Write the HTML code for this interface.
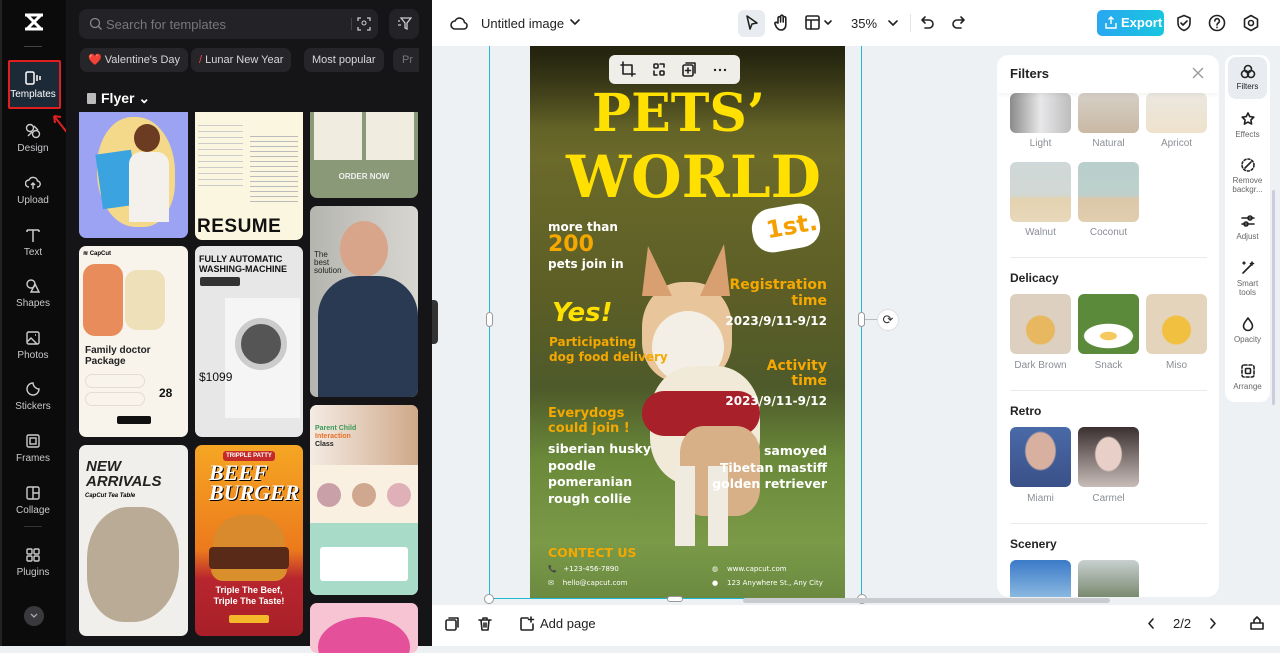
<!DOCTYPE html>
<html><head><meta charset="utf-8"><style>
*{box-sizing:border-box;margin:0;padding:0}
body{width:1280px;height:646px;overflow:hidden;position:relative;font-family:"Liberation Sans",sans-serif;background:#eef1f4}
.a{position:absolute}
.side{left:0;top:0;width:66px;height:646px;background:#0b0b0c}
.si{position:absolute;left:0;width:66px;text-align:center;color:#c9c9cc;font-size:10px}
.si svg{display:block;margin:0 auto 3px}
.panel{left:66px;top:0;width:366px;height:646px;background:#151517}
.chip{position:absolute;top:48px;height:24px;border-radius:7px;background:#26262a;color:#d8d8da;font-size:11px;line-height:24px;padding:0 8px}
.card{position:absolute;border-radius:7px;overflow:hidden}
.top{left:432px;top:0;width:848px;height:46px;background:#fff}
.bot{left:432px;top:605px;width:848px;height:41px;background:#fff}
.ic{stroke:#222;fill:none;stroke-width:1.6;stroke-linecap:round;stroke-linejoin:round}
.p{font-family:"DejaVu Sans",sans-serif;font-weight:bold;position:absolute;white-space:nowrap}
.th{position:absolute;width:61px;height:60px;border-radius:6px;overflow:hidden}
.lb{position:absolute;width:61px;text-align:center;font-size:10px;color:#8a8f96}
.sec{position:absolute;left:1010px;font-size:12px;font-weight:bold;color:#222}
.hr{position:absolute;left:1010px;width:197px;height:1px;background:#e8eaed}
.tl{position:absolute;left:1228px;width:39px;text-align:center;font-size:8px;color:#666;line-height:9px}
.tl svg{display:block;margin:0 auto 3px}
</style></head><body>

<div class="a side"></div>
<svg class="a" style="left:23px;top:12px" width="22" height="20" viewBox="0 0 22 20"><path d="M2 3h18M2 17h18M4 3l14 14M18 3L4 17" stroke="#fff" stroke-width="3" fill="none"/></svg>
<div class="a" style="left:24px;top:46px;width:18px;height:1px;background:#444"></div>
<div class="a" style="left:8px;top:60px;width:53px;height:49px;border:2px solid #e02020;background:#1c2a38;border-radius:2px"></div>
<div class="si" style="top:70px;color:#fff"><svg width="16" height="16" viewBox="0 0 16 16"><rect x="1" y="2" width="8" height="12" rx="1.5" stroke="#fff" stroke-width="1.5" fill="none"/><path d="M12 5v6M15 6v4" stroke="#fff" stroke-width="1.5"/></svg>Templates</div>
<svg class="a" style="left:50px;top:112px" width="22" height="26"><path d="M19 23L4 4M4 4l1 7M4 4l7 1" stroke="#e02020" stroke-width="2" fill="none"/></svg>
<div class="si" style="top:122px"><svg width="16" height="18" viewBox="0 0 16 16"><circle cx="5" cy="5" r="3.5" stroke="#ccc" fill="none" stroke-width="1.4"/><circle cx="11" cy="11" r="3.5" stroke="#ccc" fill="none" stroke-width="1.4"/><path d="M9 3l4 4M3 13l4-4" stroke="#ccc" stroke-width="1.4"/></svg>Design</div>
<div class="si" style="top:174px"><svg width="16" height="18" viewBox="0 0 16 16"><path d="M4 12a3.5 3.5 0 010-7 4.5 4.5 0 018.5 1A3 3 0 0112 12M8 14V8M6 10l2-2 2 2" stroke="#ccc" fill="none" stroke-width="1.4"/></svg>Upload</div>
<div class="si" style="top:226px"><svg width="16" height="18" viewBox="0 0 16 16"><path d="M2 3h12M8 3v12M2 3v2M14 3v2" stroke="#ccc" fill="none" stroke-width="1.5"/></svg>Text</div>
<div class="si" style="top:277px"><svg width="16" height="18" viewBox="0 0 16 16"><circle cx="6" cy="6" r="4" stroke="#ccc" fill="none" stroke-width="1.4"/><path d="M10 6l4 8H6z" stroke="#ccc" fill="none" stroke-width="1.4"/></svg>Shapes</div>
<div class="si" style="top:329px"><svg width="16" height="18" viewBox="0 0 16 16"><rect x="2" y="2" width="12" height="12" rx="1.5" stroke="#ccc" fill="none" stroke-width="1.4"/><path d="M2 12l4-4 6 6M10 5h1" stroke="#ccc" fill="none" stroke-width="1.4"/></svg>Photos</div>
<div class="si" style="top:380px"><svg width="16" height="18" viewBox="0 0 16 16"><path d="M14 8a6 6 0 11-6-6c0 3 3 6 6 6z" stroke="#ccc" fill="none" stroke-width="1.4"/></svg>Stickers</div>
<div class="si" style="top:432px"><svg width="16" height="18" viewBox="0 0 16 16"><rect x="2" y="2" width="12" height="12" rx="1.5" stroke="#ccc" fill="none" stroke-width="1.4"/><rect x="5" y="5" width="6" height="6" stroke="#ccc" fill="none" stroke-width="1.4"/></svg>Frames</div>
<div class="si" style="top:484px"><svg width="16" height="18" viewBox="0 0 16 16"><rect x="2" y="2" width="12" height="12" rx="1.5" stroke="#ccc" fill="none" stroke-width="1.4"/><path d="M8 2v12M8 8h6" stroke="#ccc" stroke-width="1.4"/></svg>Collage</div>
<div class="a" style="left:24px;top:526px;width:18px;height:1px;background:#333"></div>
<div class="si" style="top:546px"><svg width="16" height="18" viewBox="0 0 16 16"><rect x="2" y="2" width="5" height="5" rx="1" stroke="#ccc" fill="none" stroke-width="1.4"/><rect x="9" y="2" width="5" height="5" rx="1" stroke="#ccc" fill="none" stroke-width="1.4"/><rect x="2" y="9" width="5" height="5" rx="1" stroke="#ccc" fill="none" stroke-width="1.4"/><rect x="9" y="9" width="5" height="5" rx="1" stroke="#ccc" fill="none" stroke-width="1.4"/></svg>Plugins</div>
<div class="a" style="left:24px;top:606px;width:20px;height:20px;border-radius:50%;background:#3a3a3e"></div>
<svg class="a" style="left:29px;top:612px" width="10" height="8"><path d="M2 2l3 3 3-3" stroke="#aaa" fill="none" stroke-width="1.3"/></svg>

<div class="a panel"></div>
<div class="a" style="left:79px;top:9px;width:299px;height:30px;border-radius:8px;background:#232327"></div>
<svg class="a" style="left:89px;top:17px" width="14" height="14"><circle cx="6" cy="6" r="4.5" stroke="#888" fill="none" stroke-width="1.3"/><path d="M9.5 9.5l3 3" stroke="#888" stroke-width="1.3"/></svg>
<div class="a" style="left:106px;top:17px;color:#77777c;font-size:13px">Search for templates</div>
<div class="a" style="left:351px;top:18px;width:1px;height:12px;background:#444"></div>
<svg class="a" style="left:357px;top:17px" width="14" height="14"><path d="M1 4V1h3M10 1h3v3M13 10v3h-3M4 13H1v-3" stroke="#ccc" fill="none" stroke-width="1.3"/><circle cx="7" cy="6" r="2" stroke="#ccc" fill="none"/></svg>
<div class="a" style="left:389px;top:9px;width:30px;height:30px;border-radius:8px;background:#232327"></div>
<svg class="a" style="left:397px;top:16px" width="15" height="15"><path d="M4 2h10l-4 5v6l-2-1V7z M1 5h2M1 9h3" stroke="#ccc" fill="none" stroke-width="1.3"/></svg>
<div class="chip" style="left:80px">❤️ Valentine's Day</div>
<div class="chip" style="left:191px"><span style="color:#e44">/</span> Lunar New Year</div>
<div class="chip" style="left:304px">Most popular</div>
<div class="chip" style="left:393px;width:26px;color:#777;padding:0 0 0 9px;overflow:hidden;border-radius:7px 0 0 7px">Pr</div>
<svg class="a" style="left:86px;top:92px" width="11" height="13"><rect x="1" y="1" width="9" height="11" rx="1" fill="#bbb"/></svg>
<div class="a" style="left:101px;top:90px;color:#fff;font-size:14px;font-weight:bold">Flyer ⌄</div>

<!-- col1 -->
<div class="card" style="left:79px;top:112px;width:109px;height:126px;background:#9ca3f3;border-radius:0 0 7px 7px">
<div class="a" style="left:18px;top:5px;width:78px;height:110px;border-radius:45% 50% 40% 50%;background:#f5d98a"></div>
<div class="a" style="left:20px;top:40px;width:36px;height:55px;background:#3aa3e0;transform:rotate(-8deg)"></div>
<div class="a" style="left:55px;top:12px;width:26px;height:28px;border-radius:50%;background:#6b3c22"></div>
<div class="a" style="left:50px;top:40px;width:40px;height:70px;border-radius:12px 12px 0 0;background:#f4f1ec"></div></div>
<div class="card" style="left:79px;top:246px;width:109px;height:191px;background:#f8f4ec">
<div class="a" style="left:4px;top:4px;font-size:6px;font-weight:bold">≋ CapCut</div>
<div class="a" style="left:4px;top:18px;width:40px;height:72px;background:#e88c5c;border-radius:12px"></div>
<div class="a" style="left:46px;top:24px;width:40px;height:60px;background:#eee0b8;border-radius:12px"></div>
<div class="a" style="left:6px;top:99px;font-size:10px;font-weight:bold;line-height:11px;color:#222">Family doctor<br>Package</div>
<div class="a" style="left:6px;top:128px;width:60px;height:14px;border-radius:7px;border:1px solid #e4dcd0"></div>
<div class="a" style="left:6px;top:146px;width:60px;height:14px;border-radius:7px;border:1px solid #e4dcd0"></div>
<div class="a" style="left:80px;top:140px;font-size:12px;font-weight:bold;color:#111">28</div>
<div class="a" style="left:38px;top:170px;width:34px;height:8px;background:#111;border-radius:2px"></div></div>
<div class="card" style="left:79px;top:445px;width:109px;height:191px;background:#f1efeb">
<div class="a" style="left:7px;top:14px;font-size:15px;font-weight:bold;font-style:italic;line-height:15px;color:#222">NEW<br>ARRIVALS</div>
<div class="a" style="left:6px;top:48px;font-size:6px;font-weight:bold;font-style:italic">CapCut Tea Table</div>
<div class="a" style="left:8px;top:62px;width:92px;height:115px;border-radius:45% 40% 50% 40%;background:#b9ab95"></div></div>
<!-- col2 -->
<div class="card" style="left:195px;top:112px;width:108px;height:128px;background:#fbf6e0;border-radius:0 0 7px 7px">
<div class="a" style="left:3px;top:8px;width:45px;height:70px;background:repeating-linear-gradient(#fbf6e0 0 5px,#ccc 5px 6px)"></div>
<div class="a" style="left:55px;top:20px;width:48px;height:70px;background:repeating-linear-gradient(#fbf6e0 0 4px,#bbb 4px 5px)"></div>
<div class="a" style="left:2px;top:104px;font-size:19px;font-weight:bold;color:#111;letter-spacing:0.5px">RESUME</div></div>
<div class="card" style="left:195px;top:246px;width:108px;height:191px;background:#e7e7e7">
<div class="a" style="left:4px;top:8px;font-size:9px;font-weight:bold;line-height:10px;color:#111">FULLY AUTOMATIC<br>WASHING-MACHINE</div>
<div class="a" style="left:5px;top:31px;width:40px;height:9px;background:#333;border-radius:2px"></div>
<div class="a" style="left:30px;top:52px;width:75px;height:120px;background:#f5f5f5"></div>
<div class="a" style="left:40px;top:72px;width:52px;height:52px;border-radius:50%;background:#555;border:6px solid #ccc"></div>
<div class="a" style="left:4px;top:124px;font-size:12px;color:#111">$1099</div></div>
<div class="card" style="left:195px;top:445px;width:108px;height:191px;background:linear-gradient(#f5a623 0,#ec7a1c 55%,#b8262e 70%,#a81f28 100%)">
<div class="a" style="left:28px;top:6px;width:52px;height:10px;background:#c52a2a;border-radius:3px;color:#fff;font-size:6px;text-align:center;line-height:10px;font-weight:bold">TRIPPLE PATTY</div>
<div class="a" style="left:14px;top:18px;font-size:22px;font-weight:bold;font-style:italic;color:#fff;font-family:'Liberation Serif',serif;line-height:20px;text-shadow:1px 1px 0 #000">BEEF<br>BURGER</div>
<div class="a" style="left:18px;top:70px;width:72px;height:34px;border-radius:40px 40px 6px 6px;background:#d98a2c"></div>
<div class="a" style="left:14px;top:102px;width:80px;height:22px;background:#5a2a18;border-radius:4px"></div>
<div class="a" style="left:16px;top:124px;width:76px;height:12px;background:#d9902c;border-radius:0 0 20px 20px"></div>
<div class="a" style="left:0;top:140px;width:108px;text-align:center;font-size:9px;font-weight:bold;color:#fff;line-height:11px">Triple The Beef,<br>Triple The Taste!</div>
<div class="a" style="left:34px;top:170px;width:40px;height:8px;background:#f5b82a;border-radius:2px"></div></div>
<!-- col3 -->
<div class="card" style="left:310px;top:112px;width:108px;height:86px;background:#8a9a78;border-radius:0 0 7px 7px">
<div class="a" style="left:4px;top:0;width:48px;height:48px;background:#f1ece0"></div>
<div class="a" style="left:56px;top:0;width:48px;height:48px;background:#f1ece0"></div>
<div class="a" style="left:0;top:60px;width:108px;text-align:center;font-size:8px;font-weight:bold;color:#eee">ORDER NOW</div></div>
<div class="card" style="left:310px;top:206px;width:108px;height:191px;background:linear-gradient(90deg,#b5b5b0,#d8d6d0)">
<div class="a" style="left:30px;top:15px;width:48px;height:56px;border-radius:50%;background:#d9a58a"></div>
<div class="a" style="left:8px;top:70px;width:100px;height:121px;border-radius:40px 40px 0 0;background:#2a3a52"></div>
<div class="a" style="left:4px;top:45px;font-size:8px;line-height:8px;color:#222">The<br>best<br>solution</div></div>
<div class="card" style="left:310px;top:405px;width:108px;height:190px;background:#faf0e2">
<div class="a" style="left:0;top:0;width:108px;height:60px;background:linear-gradient(90deg,#f4ece4,#cfa888)"></div>
<div class="a" style="left:5px;top:20px;font-size:7px;font-weight:bold;line-height:8px;color:#3a9a5a">Parent Child<br><span style="color:#e8702a">Interaction</span><br><span style="color:#222">Class</span></div>
<div class="a" style="left:7px;top:78px;width:24px;height:24px;border-radius:50%;background:#c9a0a8"></div>
<div class="a" style="left:42px;top:78px;width:24px;height:24px;border-radius:50%;background:#d0a890"></div>
<div class="a" style="left:77px;top:78px;width:24px;height:24px;border-radius:50%;background:#e0b0b8"></div>
<div class="a" style="left:0;top:118px;width:108px;height:72px;background:#a8dcc8"></div>
<div class="a" style="left:10px;top:142px;width:88px;height:34px;background:#fff;border-radius:3px"></div></div>
<div class="card" style="left:310px;top:603px;width:108px;height:50px;background:#f7c4d4">
<div class="a" style="left:8px;top:14px;width:92px;height:60px;border-radius:50%;background:#e5509a"></div></div>
<div class="a" style="left:432px;top:300px;width:6px;height:44px;background:#333;border-radius:0 4px 4px 0"></div>

<!-- top bar -->
<div class="a top"></div>
<svg class="a" style="left:450px;top:15px" width="18" height="16" viewBox="0 0 18 16"><path d="M5 14a4 4 0 010-8 5 5 0 019.5 1.5A3.3 3.3 0 0114 14z" class="ic"/></svg>
<div class="a" style="left:481px;top:16px;font-size:13px;color:#222">Untitled image</div>
<svg class="a" style="left:570px;top:18px" width="10" height="8"><path d="M1 2l4 4 4-4" class="ic" stroke-width="1.4"/></svg>
<div class="a" style="left:738px;top:10px;width:27px;height:27px;border-radius:6px;background:#e8ebef"></div>
<svg class="a" style="left:744px;top:14px" width="16" height="18"><path d="M3 2l10 7-5 1-2 5z" class="ic"/></svg>
<svg class="a" style="left:773px;top:14px" width="16" height="18"><path d="M5 9V4a1.3 1.3 0 012.6 0v4V2.5a1.3 1.3 0 012.6 0V8V4a1.3 1.3 0 012.6 0v7c0 3-2 5-5 5-2 0-3-1-4.5-3L2 10a1.2 1.2 0 012-1.3z" class="ic" stroke-width="1.3"/></svg>
<svg class="a" style="left:805px;top:15px" width="30" height="16"><rect x="1" y="1" width="13" height="13" rx="1.5" class="ic" stroke-width="1.4"/><path d="M1 5h13M6 5v9M20 6l3 3 3-3" class="ic" stroke-width="1.4"/></svg>
<div class="a" style="left:851px;top:16px;font-size:13px;color:#222">35%</div>
<svg class="a" style="left:888px;top:19px" width="10" height="8"><path d="M1 2l4 4 4-4" class="ic" stroke-width="1.4"/></svg>
<div class="a" style="left:910px;top:14px;width:1px;height:18px;background:#e2e4e8"></div>
<svg class="a" style="left:920px;top:15px" width="16" height="16"><path d="M5 2L2 5l3 3M2 5h7a4 4 0 010 8H5" class="ic"/></svg>
<svg class="a" style="left:950px;top:15px" width="16" height="16"><path d="M11 2l3 3-3 3M14 5H7a4 4 0 000 8h4" class="ic" stroke="#ccd"/></svg>
<div class="a" style="left:1097px;top:10px;width:67px;height:26px;border-radius:5px;background:linear-gradient(90deg,#2aa7f0,#19c6e0);color:#fff;font-size:13px;font-weight:bold;line-height:26px;padding-left:24px">Export</div>
<svg class="a" style="left:1105px;top:16px" width="12" height="13"><path d="M6 8V1M3.5 3.5L6 1l2.5 2.5M1 7v5h10V7" stroke="#fff" fill="none" stroke-width="1.4"/></svg>
<svg class="a" style="left:1175px;top:14px" width="18" height="18"><path d="M9 1.5l6 2.5v5c0 4-3 6.5-6 7.5-3-1-6-3.5-6-7.5V4z M6 9l2 2 4-4" class="ic"/></svg>
<svg class="a" style="left:1208px;top:14px" width="18" height="18"><circle cx="9" cy="9" r="7.5" class="ic"/><path d="M6.8 7a2.3 2.3 0 114 1.5c-1 .8-1.8 1.2-1.8 2.5M9 13.3v.2" class="ic"/></svg>
<svg class="a" style="left:1242px;top:14px" width="18" height="18"><path d="M9 1.5l6.5 3.7v7.6L9 16.5l-6.5-3.7V5.2z" class="ic"/><circle cx="9" cy="9" r="2.5" class="ic"/></svg>

<!-- canvas -->
<div class="a" style="left:530px;top:46px;width:315px;height:552px;overflow:hidden;background:
linear-gradient(#4a4a1e 0%,#6b6a2a 20%,#5c5e26 45%,#4e5a2a 62%,#6a8a3a 75%,#7a9a48 90%,#6b8a40 100%)">
<div class="a" style="left:0;top:0;width:315px;height:80px;background:linear-gradient(#22220e,rgba(0,0,0,0))"></div>
<div class="a" style="left:112px;top:236px;width:90px;height:100px;border-radius:45% 45% 40% 40%;background:#e8c59a"></div>
<div class="a" style="left:112px;top:200px;width:30px;height:50px;background:#d8a070;clip-path:polygon(0 100%,20% 0,100% 100%)"></div>
<div class="a" style="left:170px;top:198px;width:30px;height:52px;background:#d8a070;clip-path:polygon(0 100%,80% 0,100% 100%)"></div>
<div class="a" style="left:122px;top:265px;width:72px;height:72px;border-radius:50%;background:#f4efe6"></div>
<div class="a" style="left:120px;top:320px;width:110px;height:120px;border-radius:40%;background:#f2ead8"></div>
<div class="a" style="left:112px;top:345px;width:118px;height:45px;border-radius:30px;background:#a8202a"></div>
<div class="a" style="left:150px;top:380px;width:80px;height:90px;border-radius:30%;background:#d8b088"></div>
<div class="a" style="left:145px;top:420px;width:20px;height:80px;background:#f0ebe0"></div>
<div class="a" style="left:178px;top:420px;width:20px;height:80px;background:#f0ebe0"></div>
<div class="a" style="left:222px;top:160px;width:68px;height:44px;background:#fff;border-radius:20px;transform:rotate(-10deg)"></div>
<div class="p" style="left:236px;top:166px;font-size:24px;color:#f5a000;transform:rotate(-10deg)">1st.</div>
<div class="p" style="left:62px;top:38px;font-size:52px;line-height:60px;color:#ffe000;font-family:'DejaVu Serif',serif">PETS’</div>
<div class="p" style="left:36px;top:98px;font-size:58px;line-height:66px;color:#ffe000;font-family:'DejaVu Serif',serif">WORLD</div>
<div class="p" style="left:18px;top:174px;font-size:12px;color:#fff">more than</div>
<div class="p" style="left:18px;top:186px;font-size:22px;color:#f5a800">200</div>
<div class="p" style="left:18px;top:211px;font-size:12px;color:#fff">pets join in</div>
<div class="p" style="left:22px;top:252px;font-size:26px;color:#ffe000;font-style:italic">Yes!</div>
<div class="p" style="left:19px;top:289px;font-size:12px;color:#f5a800;line-height:15px">Participating<br>dog food delivery</div>
<div class="p" style="left:160px;top:231px;width:137px;text-align:right;font-size:14px;color:#f5a800;line-height:16px">Registration<br>time</div>
<div class="p" style="left:150px;top:268px;width:147px;text-align:right;font-size:12px;color:#fff">2023/9/11-9/12</div>
<div class="p" style="left:160px;top:313px;width:137px;text-align:right;font-size:14px;color:#f5a800;line-height:15px">Activity<br>time</div>
<div class="p" style="left:150px;top:348px;width:147px;text-align:right;font-size:12px;color:#fff">2023/9/11-9/12</div>
<div class="p" style="left:18px;top:360px;font-size:13px;color:#f5a800;line-height:15px">Everydogs<br>could join !</div>
<div class="p" style="left:18px;top:395px;font-size:12.5px;color:#fff;line-height:16.5px">siberian husky<br>poodle<br>pomeranian<br>rough collie</div>
<div class="p" style="left:140px;top:397px;width:157px;text-align:right;font-size:12.5px;color:#fff;line-height:16.5px">samoyed<br>Tibetan mastiff<br>golden retriever</div>
<div class="p" style="left:18px;top:499px;font-size:12.5px;color:#f5a800">CONTECT US</div>
<div class="p" style="left:18px;top:516px;font-size:7px;color:#fff;font-weight:normal;line-height:14px">📞&nbsp;&nbsp;&nbsp;+123-456-7890<br>✉&nbsp;&nbsp;&nbsp;&nbsp;hello@capcut.com</div>
<div class="p" style="left:182px;top:516px;font-size:7px;color:#fff;font-weight:normal;line-height:14px">◍&nbsp;&nbsp;&nbsp;&nbsp;www.capcut.com<br>●&nbsp;&nbsp;&nbsp;&nbsp;123 Anywhere St., Any City</div>
</div>
<div class="a" style="left:489px;top:46px;width:373px;height:553px;border:1.5px solid #1fb8d0;border-top:none"></div>
<div class="a" style="left:486px;top:312px;width:7px;height:15px;border-radius:4px;background:#fff;border:1px solid #999"></div>
<div class="a" style="left:858px;top:312px;width:7px;height:15px;border-radius:4px;background:#fff;border:1px solid #999"></div>
<div class="a" style="left:865px;top:319px;width:12px;height:1px;background:#bbb"></div>
<div class="a" style="left:877px;top:309px;width:22px;height:22px;border-radius:50%;background:#fff;border:1px solid #ddd;font-size:13px;text-align:center;line-height:20px;color:#333">⟳</div>
<div class="a" style="left:484px;top:594px;width:10px;height:10px;border-radius:50%;background:#fff;border:1px solid #999"></div>
<div class="a" style="left:857px;top:594px;width:10px;height:10px;border-radius:50%;background:#fff;border:1px solid #999"></div>
<div class="a" style="left:667px;top:596px;width:16px;height:6px;border-radius:3px;background:#fff;border:1px solid #999"></div>
<div class="a" style="left:743px;top:598px;width:367px;height:5px;border-radius:3px;background:#c8ccd1"></div>
<div class="a" style="left:609px;top:55px;width:131px;height:29px;border-radius:6px;background:#efeee9"></div>
<svg class="a" style="left:620px;top:61px" width="115" height="18"><path d="M3 1v12h12M1 4h11v11" class="ic" stroke-width="1.5"/><rect x="34" y="3" width="4" height="4" rx="1" class="ic" stroke-width="1.3"/><rect x="40" y="10" width="4" height="4" rx="1" class="ic" stroke-width="1.3"/><path d="M40 3h4v3M34 10v4h3" class="ic" stroke-width="1.3"/><rect x="63" y="4" width="10" height="11" rx="1.5" class="ic" stroke-width="1.4"/><path d="M66 2h9v10M68 7v5M65.5 9.5h5" class="ic" stroke-width="1.3"/><circle cx="95" cy="9" r="1.2" fill="#222"/><circle cx="100" cy="9" r="1.2" fill="#222"/><circle cx="105" cy="9" r="1.2" fill="#222"/></svg>

<!-- filters panel -->
<div class="a" style="left:997px;top:55px;width:222px;height:542px;background:#fff;border-radius:12px;overflow:hidden">
<div class="th" style="left:13px;top:38px;height:40px;background:linear-gradient(90deg,#8a8a8a,#e8e8ea 50%,#bdbdbd)"></div>
<div class="th" style="left:81px;top:38px;height:40px;background:linear-gradient(#d6cfc6,#c9b9a4)"></div>
<div class="th" style="left:149px;top:38px;height:40px;background:linear-gradient(#ebe7e0,#efe2cc)"></div>
<div class="a" style="left:0;top:0;width:222px;height:38px;background:#fff;box-shadow:0 2px 4px rgba(0,0,0,.05)"></div>
</div>
<div class="a" style="left:1010px;top:66px;font-size:13px;font-weight:bold;color:#222">Filters</div>
<svg class="a" style="left:1192px;top:67px" width="12" height="12"><path d="M1 1l10 10M11 1L1 11" stroke="#999" stroke-width="1.3"/></svg>
<div class="lb" style="left:1010px;top:138px">Light</div><div class="lb" style="left:1078px;top:138px">Natural</div><div class="lb" style="left:1146px;top:138px">Apricot</div>
<div class="th" style="left:1010px;top:162px;background:linear-gradient(#cfd8d8 0,#d2d8d4 55%,#e4d2b0 62%,#e8d8ba 100%)"></div>
<div class="th" style="left:1078px;top:162px;background:linear-gradient(#b8cfcc 0,#bed0cc 55%,#dcc8a8 62%,#e0ceb0 100%)"></div>
<div class="lb" style="left:1010px;top:227px">Walnut</div><div class="lb" style="left:1078px;top:227px">Coconut</div>
<div class="hr" style="top:257px"></div>
<div class="sec" style="top:271px">Delicacy</div>
<div class="th" style="left:1010px;top:294px;background:radial-gradient(circle at 50% 60%,#e8b860 0 14px,#ddd0c0 15px)"></div>
<div class="th" style="left:1078px;top:294px;background:radial-gradient(ellipse 24px 12px at 50% 70%,#f8c860 0 8px,#fff 9px 24px,#5a8a3a 25px),linear-gradient(#eee,#eee)"></div>
<div class="th" style="left:1146px;top:294px;background:radial-gradient(circle at 50% 60%,#f2c040 0 14px,#e4d4bc 15px)"></div>
<div class="lb" style="left:1010px;top:360px">Dark Brown</div><div class="lb" style="left:1078px;top:360px">Snack</div><div class="lb" style="left:1146px;top:360px">Miso</div>
<div class="hr" style="top:390px"></div>
<div class="sec" style="top:404px">Retro</div>
<div class="th" style="left:1010px;top:427px;background:radial-gradient(ellipse 16px 20px at 50% 40%,#d8b0a0 0 90%,transparent 100%),linear-gradient(#4a6aa8,#3a5088)"></div>
<div class="th" style="left:1078px;top:427px;background:radial-gradient(ellipse 14px 18px at 50% 45%,#e8d0c8 0 90%,transparent 100%),linear-gradient(#3a3030,#c8bcb8)"></div>
<div class="lb" style="left:1010px;top:493px">Miami</div><div class="lb" style="left:1078px;top:493px">Carmel</div>
<div class="hr" style="top:523px"></div>
<div class="sec" style="top:537px">Scenery</div>
<div class="th" style="left:1010px;top:560px;height:37px;border-radius:6px 6px 0 0;background:linear-gradient(#3a7ac8,#8ab8e0)"></div>
<div class="th" style="left:1078px;top:560px;height:37px;border-radius:6px 6px 0 0;background:linear-gradient(#c8d0d0,#7a8a70)"></div>

<!-- tool rail -->
<div class="a" style="left:1225px;top:55px;width:45px;height:347px;background:#fff;border-radius:10px"></div>
<div class="a" style="left:1228px;top:57px;width:39px;height:42px;background:#e8ebef;border-radius:8px"></div>
<div class="tl" style="top:64px;color:#222"><svg width="16" height="15"><circle cx="8" cy="5" r="3.5" class="ic" stroke-width="1.4"/><circle cx="5" cy="10" r="3.5" class="ic" stroke-width="1.4"/><circle cx="11" cy="10" r="3.5" class="ic" stroke-width="1.4"/></svg>Filters</div>
<div class="tl" style="top:111px"><svg width="16" height="16"><path d="M8 2l1.8 3.6 4 .6-2.9 2.8.7 4L8 11.1 4.4 13l.7-4L2.2 6.2l4-.6z" class="ic" stroke-width="1.3"/></svg>Effects</div>
<div class="tl" style="top:157px"><svg width="16" height="16"><circle cx="8" cy="8" r="6" class="ic" stroke-width="1.2" stroke-dasharray="2 2"/><path d="M5 11l6-6" class="ic" stroke-width="1.6"/></svg>Remove<br>backgr...</div>
<div class="tl" style="top:213px"><svg width="16" height="16"><path d="M2 5h12M2 11h12" class="ic" stroke-width="1.3"/><circle cx="10" cy="5" r="2" fill="#fff" class="ic" stroke-width="1.3"/><circle cx="6" cy="11" r="2" fill="#fff" class="ic" stroke-width="1.3"/></svg>Adjust</div>
<div class="tl" style="top:260px"><svg width="16" height="16"><path d="M3 13l8-8M12 2v3M10.5 3.5h3M4 2v2M3 3h2" class="ic" stroke-width="1.4"/></svg>Smart<br>tools</div>
<div class="tl" style="top:316px"><svg width="16" height="16"><path d="M8 2c2 3 4.5 5 4.5 8a4.5 4.5 0 01-9 0c0-3 2.5-5 4.5-8z" class="ic" stroke-width="1.3"/></svg>Opacity</div>
<div class="tl" style="top:363px"><svg width="16" height="16"><rect x="2" y="2" width="12" height="12" rx="2" class="ic" stroke-width="1.3" stroke-dasharray="3 2"/><rect x="5.5" y="5.5" width="5" height="5" rx="1" class="ic" stroke-width="1.3"/></svg>Arrange</div>
<div class="a" style="left:1272px;top:190px;width:3px;height:215px;border-radius:2px;background:#ccd"></div>

<!-- bottom bar -->
<div class="a bot"></div>
<svg class="a" style="left:444px;top:616px" width="16" height="16"><rect x="2" y="4" width="10" height="10" rx="1.5" class="ic" stroke-width="1.4"/><path d="M5 2h9v9" class="ic" stroke-width="1.4"/></svg>
<svg class="a" style="left:477px;top:616px" width="16" height="16"><path d="M2 4h12M6 4V2h4v2M4 4l1 10h6l1-10M7 7v4M9 7v4" class="ic" stroke-width="1.3"/></svg>
<svg class="a" style="left:519px;top:616px" width="16" height="16"><path d="M9 2H3a1 1 0 00-1 1v10a1 1 0 001 1h10a1 1 0 001-1V8M12 1v5M9.5 3.5h5" class="ic" stroke-width="1.4"/></svg>
<div class="a" style="left:540px;top:616px;font-size:13px;color:#222">Add page</div>
<svg class="a" style="left:1146px;top:617px" width="10" height="13"><path d="M7 2L3 6.5 7 11" class="ic" stroke-width="1.5"/></svg>
<div class="a" style="left:1173px;top:616px;font-size:13px;color:#222">2/2</div>
<svg class="a" style="left:1208px;top:617px" width="10" height="13"><path d="M3 2l4 4.5L3 11" class="ic" stroke="#ccc" stroke-width="1.5"/></svg>
<svg class="a" style="left:1249px;top:615px" width="16" height="16"><path d="M2 8h12v6H2zM5 8V5l3-3 3 3v3" class="ic" stroke-width="1.4"/></svg>
<div class="a" style="left:0;top:0;width:2px;height:646px;background:#222"></div>
</body></html>
